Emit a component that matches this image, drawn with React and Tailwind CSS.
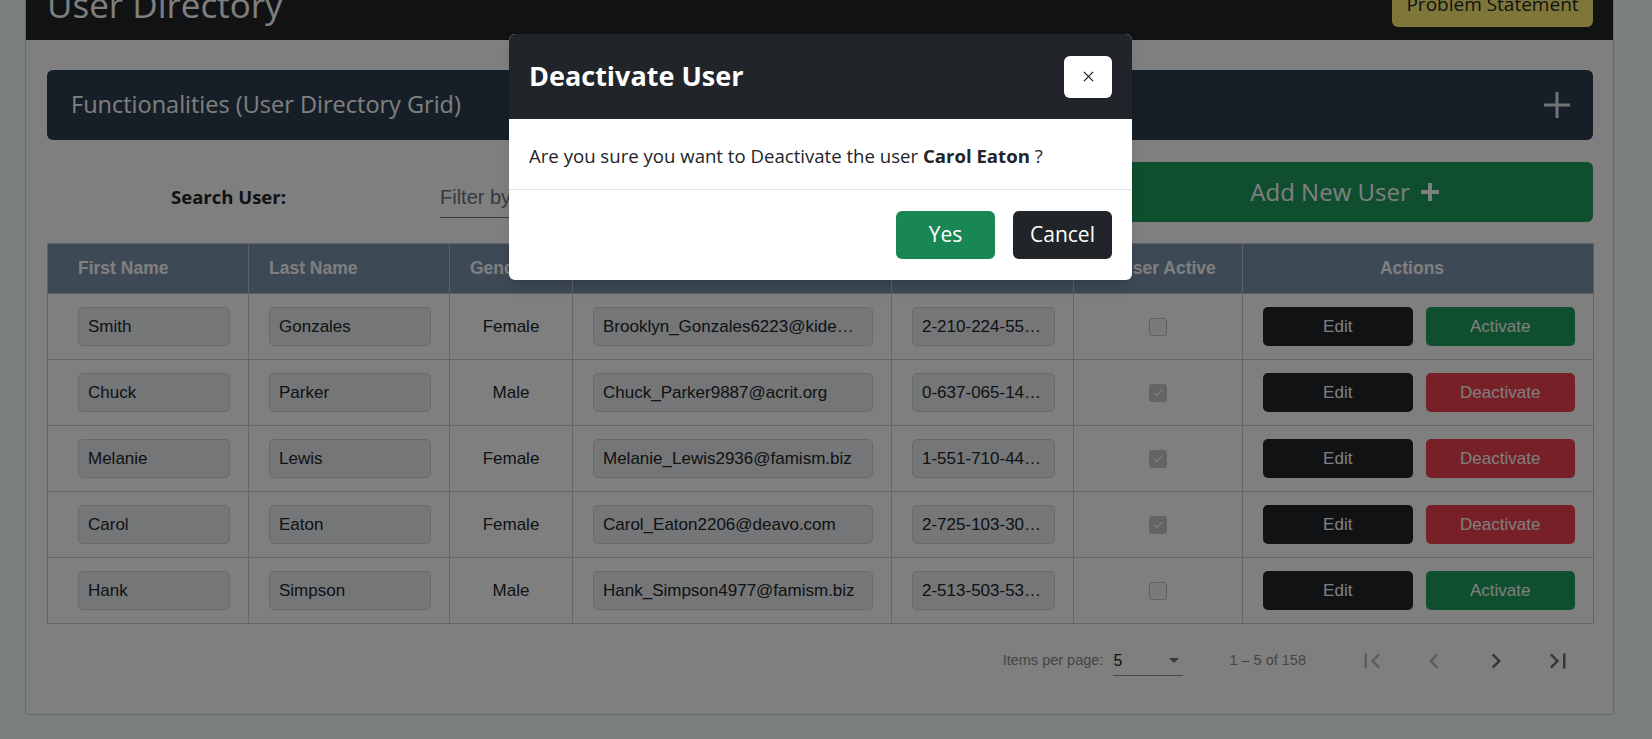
import React from 'react';

const users = [
  { first: 'Smith', last: 'Gonzales', gender: 'Female', email: 'Brooklyn_Gonzales6223@kidewa.info', phone: '2-210-224-5581 x4820', active: false },
  { first: 'Chuck', last: 'Parker', gender: 'Male', email: 'Chuck_Parker9887@acrit.org', phone: '0-637-065-1437 x112', active: true },
  { first: 'Melanie', last: 'Lewis', gender: 'Female', email: 'Melanie_Lewis2936@famism.biz', phone: '1-551-710-4490 x73', active: true },
  { first: 'Carol', last: 'Eaton', gender: 'Female', email: 'Carol_Eaton2206@deavo.com', phone: '2-725-103-3014 x561', active: true },
  { first: 'Hank', last: 'Simpson', gender: 'Male', email: 'Hank_Simpson4977@famism.biz', phone: '2-513-503-5372 x90', active: false },
];

const Field = ({ value, className }) => (
  <input
    readOnly
    value={value}
    className={`h-[39px] rounded-[5px] border border-[#ced4da] bg-[#e9ecef] px-[9px] text-[17px] text-[#212529] text-ellipsis overflow-hidden outline-none ${className}`}
  />
);

const Checkbox = ({ checked }) =>
  checked ? (
    <span className="inline-flex w-[18px] h-[18px] rounded-[3px] bg-[#c9c9c9] items-center justify-center">
      <svg viewBox="0 0 16 16" className="w-[13px] h-[13px]" fill="none" stroke="#f2f2f2" strokeWidth="1.8">
        <path d="M3 8.5l3 3 7-7" />
      </svg>
    </span>
  ) : (
    <span className="inline-block w-[18px] h-[18px] rounded-[3px] border border-[#c4c4c4] bg-[#f4f4f4]"></span>
  );

const PageIcon = ({ d, disabled }) => (
  <button className="w-[40px] h-[40px] flex items-center justify-center">
    <svg viewBox="0 0 24 24" className="w-[30px] h-[30px]" fill={disabled ? '#bdbdbd' : '#6e6e6e'}>
      <path d={d} />
    </svg>
  </button>
);

const App = () => {
  return (
    <div className="relative h-[739px] w-full overflow-hidden bg-[#f6feff] font-['Open_Sans',sans-serif]">
      {/* Page card, scrolled a little */}
      <div className="ml-[25px] w-[1589px] -mt-[33px] bg-white border border-[#d2d2d2] rounded-[4px]">
        <div className="h-[72px] bg-[#212529] flex items-center justify-between pl-[21px] pr-[20px]">
          <h1 className="text-[35px] text-white leading-none">User Directory</h1>
          <button className="h-[46px] w-[201px] rounded-[6px] bg-[#ffef74] text-[19px] text-[#212529]">
            Problem Statement
          </button>
        </div>

        <div className="pl-[21px] pr-[20px] pt-[30px] pb-[16px]">
          {/* Functionalities accordion */}
          <div className="h-[70px] rounded-[6px] bg-[#2c3e50] flex items-center justify-between pl-[24px] pr-[22px]">
            <span className="text-[23.5px] text-white">Functionalities (User Directory Grid)</span>
            <svg viewBox="0 0 28 28" className="w-[28px] h-[28px]" stroke="#e2e6ea" strokeWidth="3">
              <path d="M14 1v26M1 14h26" />
            </svg>
          </div>

          {/* Search + add */}
          <div className="mt-[22px] h-[60px] flex items-center gap-[30px]">
            <div className="w-[363px] text-center text-[18.5px] font-bold text-[#212529] pt-[10px]">Search User:</div>
            <div className="w-[627px] h-full flex items-end pb-[4px]">
              <input
                placeholder="Filter by Name or Email"
                className="w-full h-[40px] border-b border-[#6c757d] bg-transparent text-[20px] font-['Liberation_Sans',Arial,sans-serif] placeholder:text-[#6c757d] outline-none"
              />
            </div>
            <button className="w-[496px] h-full rounded-[6px] bg-[#1e9d5e] text-white text-[24px] flex items-center justify-center gap-[10px]">
              Add New User
              <svg viewBox="0 0 20 20" className="w-[20px] h-[20px]" stroke="white" strokeWidth="4">
                <path d="M10 1v18M1 10h18" />
              </svg>
            </button>
          </div>

          {/* Grid */}
          <table className="mt-[21px] w-[1546px] table-fixed border-collapse font-['Liberation_Sans',Arial,sans-serif]">
            <colgroup>
              <col className="w-[201px]" />
              <col className="w-[201px]" />
              <col className="w-[123px]" />
              <col className="w-[319px]" />
              <col className="w-[182px]" />
              <col className="w-[169px]" />
              <col className="w-[351px]" />
            </colgroup>
            <thead>
              <tr className="h-[50px] bg-[#7a93aa] text-white text-[17.5px] font-bold">
                <th className="text-left pl-[30px] border border-[#b7c3cf]">First Name</th>
                <th className="text-left pl-[20px] border border-[#b7c3cf]">Last Name</th>
                <th className="text-left pl-[20px] border border-[#b7c3cf]">Gender</th>
                <th className="text-left pl-[20px] border border-[#b7c3cf]">Email</th>
                <th className="text-left pl-[20px] border border-[#b7c3cf]">Phone</th>
                <th className="text-center pl-[20px] border border-[#b7c3cf]">User Active</th>
                <th className="text-center pr-[12px] border border-[#b7c3cf]">Actions</th>
              </tr>
            </thead>
            <tbody>
              {users.map((u) => (
                <tr key={u.email} className="h-[66px] text-[17px] text-[#212529]">
                  <td className="border border-[#cdcdcd] pl-[30px] pr-[18px]">
                    <Field value={u.first} className="w-full" />
                  </td>
                  <td className="border border-[#cdcdcd] pl-[20px] pr-[18px]">
                    <Field value={u.last} className="w-full" />
                  </td>
                  <td className="border border-[#cdcdcd] text-center">{u.gender}</td>
                  <td className="border border-[#cdcdcd] pl-[20px] pr-[18px]">
                    <Field value={u.email} className="w-full" />
                  </td>
                  <td className="border border-[#cdcdcd] pl-[20px] pr-[18px]">
                    <Field value={u.phone} className="w-full" />
                  </td>
                  <td className="border border-[#cdcdcd] text-center">
                    <div className="flex justify-center">
                      <Checkbox checked={u.active} />
                    </div>
                  </td>
                  <td className="border border-[#cdcdcd] pl-[20px] pr-[18px]">
                    <div className="flex gap-[13px]">
                      <button className="w-[150px] h-[39px] rounded-[5px] bg-[#212529] text-white text-[17px]">Edit</button>
                      {u.active ? (
                        <button className="w-[150px] h-[39px] rounded-[5px] bg-[#f0404e] text-white text-[17px]">Deactivate</button>
                      ) : (
                        <button className="w-[150px] h-[39px] rounded-[5px] bg-[#1e9d5e] text-white text-[17px]">Activate</button>
                      )}
                    </div>
                  </td>
                </tr>
              ))}
            </tbody>
          </table>

          {/* Paginator */}
          <div className="h-[74px] flex items-center justify-end pr-[15px] font-['Liberation_Sans',Arial,sans-serif] text-[14.5px] text-[#8a8a8a]">
            <span>Items per page:</span>
            <div className="ml-[10px] w-[70px] h-[30px] border-b border-[#8a8a8a] flex items-center justify-between pr-[4px]">
              <span className="text-[#212121] text-[16px]">5</span>
              <svg viewBox="0 0 10 5" className="w-[10px] h-[5px]" fill="#6e6e6e">
                <path d="M0 0l5 5 5-5z" />
              </svg>
            </div>
            <span className="ml-[46px] mr-[46px]">1 – 5 of 158</span>
            <div className="flex gap-[22px]">
              <PageIcon disabled d="M18.41 16.59L13.82 12l4.59-4.59L17 6l-6 6 6 6zM6 6h2v12H6z" />
              <PageIcon disabled d="M15.41 7.41L14 6l-6 6 6 6 1.41-1.41L10.83 12z" />
              <PageIcon d="M10 6L8.59 7.41 13.17 12l-4.58 4.59L10 18l6-6z" />
              <PageIcon d="M5.59 7.41L10.18 12l-4.59 4.59L7 18l6-6-6-6zM16 6h2v12h-2z" />
            </div>
          </div>
        </div>
      </div>

      {/* Modal backdrop */}
      <div className="absolute inset-0 bg-black/50"></div>

      {/* Deactivate dialog */}
      <div className="absolute left-[509px] top-[34px] w-[623px] rounded-[6px] bg-white overflow-hidden shadow-lg">
        <div className="h-[85px] bg-[#212529] flex items-center justify-between px-[20px]">
          <h2 className="text-[27px] font-bold text-white">Deactivate User</h2>
          <button className="w-[48px] h-[42px] rounded-[6px] bg-white flex items-center justify-center">
            <svg viewBox="0 0 12 12" className="w-[11px] h-[11px]" stroke="#212529" strokeWidth="1.4">
              <path d="M1 1l10 10M11 1L1 11" />
            </svg>
          </button>
        </div>
        <div className="h-[71px] flex items-center px-[20px] pt-[4px] text-[18.6px] text-[#212529] border-b border-[#dee2e6]">
          <p>
            Are you sure you want to Deactivate the user <b className="font-bold">Carol Eaton</b> ?
          </p>
        </div>
        <div className="px-[20px] pt-[21px] pb-[21px] flex justify-end gap-[18px]">
          <button className="w-[99px] h-[48px] rounded-[6px] bg-[#198754] text-white text-[21px]">Yes</button>
          <button className="w-[99px] h-[48px] rounded-[6px] bg-[#212529] text-white text-[21px]">Cancel</button>
        </div>
      </div>
    </div>
  );
};

export default App;
